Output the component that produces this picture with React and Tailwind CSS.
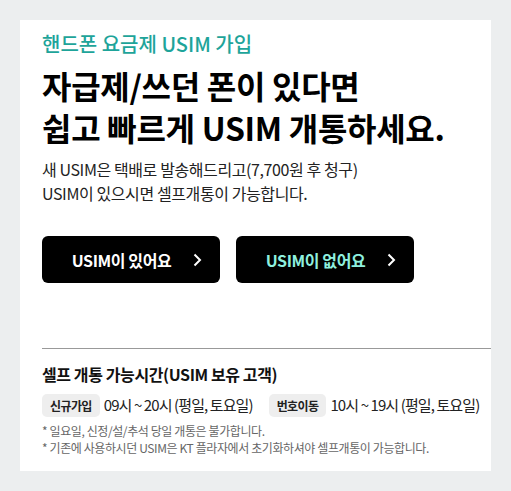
import React from "react";

const Chevron = () => (
  <svg width="9" height="14" viewBox="0 0 9 14" fill="none">
    <path d="M1.5 1.5L7 7L1.5 12.5" stroke="currentColor" strokeWidth="2" />
  </svg>
);

const UsimButton = ({ title, textColor }) => (
  <button className="flex h-[47px] w-[178px] items-center justify-center gap-[22px] rounded-[6px] bg-black pl-[12px]">
    <span className={`text-[16px] font-bold tracking-[-0.4px] ${textColor}`}>{title}</span>
    <span className="text-white">
      <Chevron />
    </span>
  </button>
);

const App = () => {
  return (
    <div className="min-h-[491px] bg-[#eceeef] px-5 pt-5 font-['Noto_Sans_CJK_KR','Noto_Sans',sans-serif]">
      <div className="w-[471px] bg-white pl-[22px] pt-[10px] pb-[15px]">
        <p className="text-[20px] font-medium leading-[28px] text-[#1ea49a]">핸드폰 요금제 USIM 가입</p>

        <h1 className="mt-[6px] text-[32px] font-bold leading-[42px] tracking-[-0.3px] text-black">
          자급제/쓰던 폰이 있다면
          <br />
          쉽고 빠르게 USIM 개통하세요.
        </h1>

        <p className="mt-[9px] text-[16px] leading-[24px] tracking-[-0.4px] text-[#222]">
          새 USIM은 택배로 발송해드리고(7,700원 후 청구)
          <br />
          USIM이 있으시면 셀프개통이 가능합니다.
        </p>

        {/* buttons */}
        <div className="mt-[31px] flex gap-4">
          <UsimButton title="USIM이 있어요" textColor="text-white" />
          <UsimButton title="USIM이 없어요" textColor="text-[#8ef0df]" />
        </div>

        <div className="mt-[65px] border-t border-[#999]" />

        <h2 className="mt-[13px] text-[16px] font-bold leading-[24px] tracking-[-0.4px] text-[#111]">
          셀프 개통 가능시간(USIM 보유 고객)
        </h2>

        <div className="mt-[8px] flex items-center whitespace-nowrap text-[15px] tracking-[-0.9px] text-[#222]">
          <span className="rounded-[5px] bg-[#eeeeee] px-[8px] text-[12px] font-bold leading-[23px] tracking-[-0.6px]">신규가입</span>
          <span className="ml-[4px]">09시 ~ 20시 (평일, 토요일)</span>
          <span className="ml-[16px] rounded-[5px] bg-[#eeeeee] px-[8px] text-[12px] font-bold leading-[23px] tracking-[-0.6px]">번호이동</span>
          <span className="ml-[4px]">10시 ~ 19시 (평일, 토요일)</span>
        </div>

        <div className="mt-[5px] text-[12px] leading-[17px] tracking-[-0.4px] text-[#666]">
          <p>* 일요일, 신정/설/추석 당일 개통은 불가합니다.</p>
          <p>* 기존에 사용하시던 USIM은 KT 플라자에서 초기화하셔야 셀프개통이 가능합니다.</p>
        </div>
      </div>
    </div>
  );
};

export default App;
